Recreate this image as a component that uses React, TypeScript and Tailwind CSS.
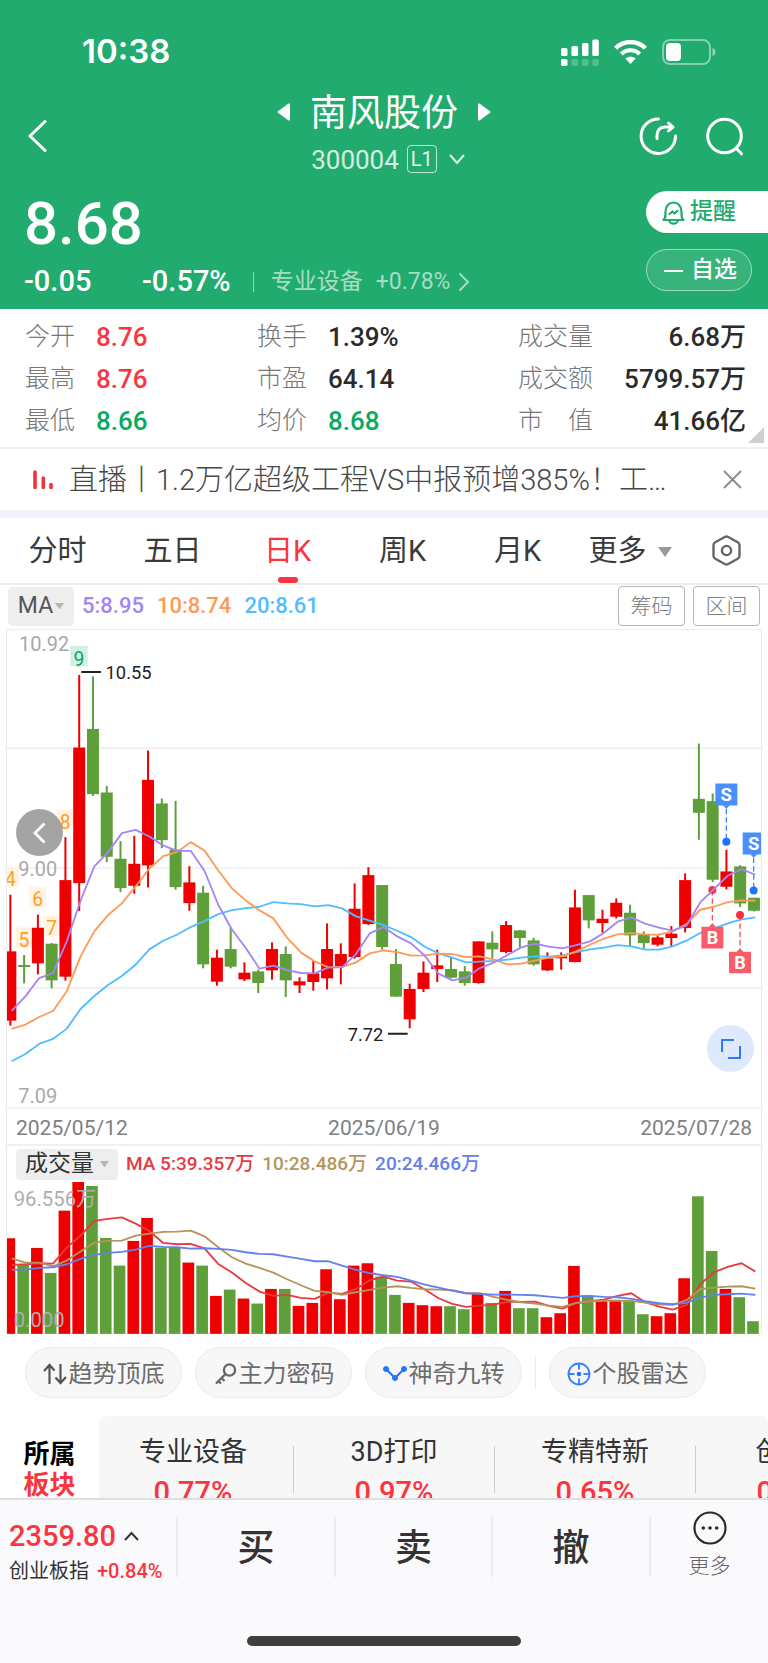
import React from "react";

type Candle = ["r" | "g", number, number, number, number];

const RED = "#ee0000";
const GREEN = "#5f9f3a";
const STEP = 41.35;

// colour, high, body top, body bottom, low
const candles: Candle[] = [
  ["r", 825, 995, 1203, 1218], ["g", 1006, 1036, 1042, 1091], ["r", 885, 924, 1031, 1064],
  ["g", 970, 972, 1082, 1106], ["r", 652, 781, 1071, 1083], ["r", 165, 383, 790, 874],
  ["g", 169, 327, 523, 528], ["g", 498, 518, 711, 727], ["g", 664, 717, 805, 817],
  ["r", 648, 732, 798, 822], ["r", 392, 480, 737, 803], ["g", 536, 551, 661, 685],
  ["g", 543, 689, 802, 810], ["r", 739, 788, 850, 873], ["g", 798, 819, 1034, 1046],
  ["r", 990, 1014, 1086, 1098], ["g", 925, 988, 1041, 1046], ["r", 1028, 1059, 1079, 1084],
  ["g", 1050, 1055, 1090, 1120], ["r", 968, 988, 1052, 1080], ["g", 980, 1003, 1082, 1132],
  ["r", 1073, 1085, 1097, 1120], ["r", 1022, 1061, 1087, 1113], ["r", 911, 988, 1076, 1109],
  ["r", 971, 1003, 1040, 1094], ["r", 791, 867, 1012, 1017], ["r", 742, 766, 913, 916],
  ["g", 796, 796, 982, 990], ["g", 988, 1033, 1131, 1131], ["r", 1092, 1108, 1199, 1226],
  ["r", 1025, 1059, 1108, 1117], ["r", 990, 1037, 1048, 1087], ["g", 1014, 1048, 1074, 1076],
  ["g", 1039, 1055, 1090, 1098], ["r", 965, 965, 1090, 1092], ["g", 935, 969, 989, 1016],
  ["r", 904, 916, 997, 1001], ["g", 931, 932, 955, 984], ["g", 954, 962, 1034, 1038],
  ["r", 998, 1016, 1052, 1054], ["r", 998, 1010, 1016, 1050], ["r", 810, 863, 1027, 1028],
  ["g", 826, 826, 902, 926], ["r", 870, 897, 910, 939], ["r", 836, 849, 891, 896],
  ["g", 855, 879, 947, 979], ["g", 935, 945, 970, 987], ["r", 948, 953, 975, 980],
  ["r", 919, 942, 955, 979], ["r", 761, 781, 925, 938], ["g", 371, 537, 579, 660],
  ["g", 521, 544, 780, 787], ["r", 690, 755, 801, 809], ["g", 736, 740, 851, 862],
  ["g", 834, 834, 873, 875],
];

const ma5 = [1174, 1130, 1075, 1060, 965, 843, 740, 697, 640, 630, 650, 677, 693, 693, 753, 855, 930, 985, 1047, 1038, 1051, 1060, 1061, 1043, 1043, 1003, 941, 922, 950, 971, 1008, 1062, 1082, 1074, 1045, 1029, 1006, 983, 972, 981, 986, 976, 965, 940, 906, 893, 912, 924, 933, 918, 848, 808, 768, 748, 765];
const ma10 = [1228, 1215, 1192, 1174, 1115, 1010, 935, 886, 851, 800, 746, 709, 697, 667, 692, 752, 806, 842, 872, 896, 954, 998, 1025, 1043, 1042, 1028, 1001, 992, 997, 1008, 1007, 1002, 1003, 1012, 1010, 1020, 1034, 1032, 1023, 1014, 1010, 995, 975, 957, 944, 940, 944, 945, 935, 913, 870, 861, 847, 842, 843];
const ma20 = [1325, 1303, 1273, 1258, 1227, 1168, 1129, 1096, 1069, 1035, 989, 963, 945, 922, 904, 883, 871, 865, 861, 847, 851, 853, 860, 856, 866, 890, 903, 916, 933, 952, 981, 1001, 1014, 1028, 1026, 1024, 1020, 1014, 1010, 1011, 1007, 997, 989, 984, 976, 980, 990, 990, 980, 963, 940, 927, 911, 899, 893];

const volumes = [415, 493, 444, 519, 332, 246, 258, 414, 497, 423, 354, 443, 443, 488, 497, 588, 569, 596, 611, 567, 567, 618, 609, 508, 598, 497, 490, 530, 585, 609, 616, 619, 619, 628, 582, 609, 573, 625, 625, 652, 640, 498, 590, 604, 600, 604, 643, 649, 640, 535, 289, 453, 567, 592, 664];
const vol5 = [495, 493, 490, 491, 443, 407, 363, 357, 352, 371, 393, 429, 433, 432, 445, 492, 518, 549, 575, 588, 585, 594, 597, 578, 582, 567, 541, 530, 542, 545, 569, 595, 612, 621, 617, 614, 606, 606, 605, 618, 626, 610, 604, 599, 588, 580, 607, 620, 629, 615, 553, 517, 501, 490, 515];
const vol10 = [475, 488, 488, 499, 482, 455, 428, 423, 422, 407, 401, 396, 395, 392, 409, 442, 472, 491, 504, 518, 538, 556, 573, 577, 585, 577, 570, 563, 559, 564, 568, 569, 571, 580, 580, 591, 600, 607, 611, 617, 621, 609, 604, 603, 602, 603, 608, 613, 615, 601, 568, 563, 560, 559, 566];
const vol20 = [510, 509, 504, 502, 493, 477, 465, 459, 456, 449, 438, 441, 442, 446, 445, 447, 450, 457, 462, 463, 470, 477, 484, 484, 497, 510, 520, 526, 531, 542, 554, 563, 572, 580, 582, 584, 584, 585, 586, 590, 594, 589, 588, 591, 592, 597, 604, 610, 613, 609, 593, 585, 583, 581, 585];

function Line({ ys, color }: { ys: number[]; color: string }) {
  return (
    <polyline
      points={ys.map((y, i) => `${(34 + i * STEP).toFixed(1)},${y}`).join(" ")}
      fill="none"
      stroke={color}
      strokeWidth="5.5"
      strokeLinejoin="round"
    />
  );
}

const counts: [string, number, number, string, string][] = [
  ["4", 30, 740, "#ff9d1c", "#fff3e4"],
  ["5", 71, 923, "#ff9d1c", "#fff3e4"],
  ["6", 112, 801, "#ff9d1c", "#fff3e4"],
  ["7", 154, 888, "#ff9d1c", "#fff3e4"],
  ["8", 195, 568, "#ff9d1c", "#fff3e4"],
  ["9", 236, 78, "#07a862", "#d3efe1"],
];

function Sell({ x, y, dot }: { x: number; y: number; dot: number }) {
  return (
    <g>
      <path d={`M${x} ${y + 76}V${dot}`} stroke="#3f86fb" strokeWidth="4" strokeDasharray="16 9" />
      <path d={`M${x - 33} ${y}h66v66h-23l-10 10l-10 -10h-23z`} fill="#4a8ffc" />
      <text x={x} y={y + 52} textAnchor="middle" fontSize="56" fontWeight="700" fill="#fff">S</text>
      <circle cx={x} cy={dot} r="12" fill="#1f74ff" />
    </g>
  );
}

function Buy({ x, y, dot }: { x: number; y: number; dot: number }) {
  return (
    <g>
      <path d={`M${x} ${dot}V${y - 10}`} stroke="#f7515e" strokeWidth="4" strokeDasharray="16 9" />
      <path d={`M${x - 33} ${y}h23l10 -11l10 11h23v65h-66z`} fill="#fa5c69" />
      <text x={x} y={y + 52} textAnchor="middle" fontSize="54" fontWeight="700" fill="#fff">B</text>
      <circle cx={x} cy={dot} r="12" fill="#f5333f" />
    </g>
  );
}

function PriceChart() {
  return (
    <svg viewBox="20 27 2264 1440" className="block w-full" role="img" aria-label="日K">
      {[28, 385, 745, 1105, 1465].map((y) => (
        <path key={y} d={`M20 ${y}H2284`} stroke="#ececee" strokeWidth="4" />
      ))}
      <g fill="#a9a9a9" fontSize="60">
        <text x="56" y="92">10.92</text>
        <text x="54" y="770">9.00</text>
        <text x="54" y="1449">7.09</text>
      </g>
      {counts.map(([n, x, y, , bg]) => (
        <path key={n} d={`M${x - 26} ${y}h52v61h-20l-6 6l-6 -6h-20z`} fill={bg} />
      ))}
      {candles.map(([c, hi, top, bottom, lo], i) => {
        const x = 30 + i * STEP;
        const fill = c === "r" ? RED : GREEN;
        return (
          <g key={i} fill={fill}>
            <rect x={x - 3} y={hi} width="6" height={Math.max(lo - hi, 1)} />
            <rect x={x - 18} y={top} width="36" height={bottom - top} />
          </g>
        );
      })}
      {counts.map(([n, x, y, color]) => (
        <text key={n} x={x} y={y + 59} textAnchor="middle" fontSize="58" fill={color}>{n}</text>
      ))}
      <path d="M243 156H302M1164 1242H1223" stroke="#222" strokeWidth="6" />
      <g fill="#222" fontSize="55">
        <text x="316" y="178">10.55</text>
        <text x="1043" y="1263">7.72</text>
      </g>
      <Line ys={ma20} color="#4fbdff" />
      <Buy x={2138} y={921} dot={811} />
      <Buy x={2221} y={996} dot={886} />
      <Sell x={2180} y={491} dot={666} />
      <Sell x={2262} y={638} dot={812} />
      <Line ys={ma10} color="#ff9a55" />
      <Line ys={ma5} color="#a385f5" />
    </svg>
  );
}

function VolumeChart() {
  return (
    <svg viewBox="20 240 2264 465" className="block w-full" role="img" aria-label="成交量">
      <path d="M20 703H2284" stroke="#dcdcdc" strokeWidth="4" />
      {volumes.map((y, i) => (
        <rect key={i} x={9.5 + i * STEP} y={y} width="35" height={702 - y} fill={candles[i][0] === "r" ? RED : GREEN} />
      ))}
      <Line ys={vol5} color="#e83a40" />
      <Line ys={vol10} color="#b5945c" />
      <Line ys={vol20} color="#6381ea" />
      <g fill="#aeaeae" fontSize="61">
        <text x="40" y="317">96.556万</text>
        <text x="40" y="681">0.000</text>
      </g>
    </svg>
  );
}

const tabs = ["分时", "五日", "日K", "周K", "月K"];

const stats: [string, string, string][][] = [
  [["今开", "8.76", "text-[#fb3540]"], ["换手", "1.39%", "text-[#2b2b2b]"], ["成交量", "6.68万", "text-[#2b2b2b]"]],
  [["最高", "8.76", "text-[#fb3540]"], ["市盈", "64.14", "text-[#2b2b2b]"], ["成交额", "5799.57万", "text-[#2b2b2b]"]],
  [["最低", "8.66", "text-[#07ab60]"], ["均价", "8.68", "text-[#07ab60]"], ["市　值", "41.66亿", "text-[#2b2b2b]"]],
];

function Header() {
  return (
    <header className="bg-[#22ab6e] text-white">
      <div className="flex h-[88px] items-center justify-between pt-4 pr-[52px] pl-[82px]">
        <span className="font-[family-name:Inter] text-[33px] font-semibold">10:38</span>
        <div className="flex items-center gap-[15px]">
          <svg width="38" height="27" viewBox="0 0 38 27" fill="#fff">
            <rect x="0" y="9" width="6.5" height="8" rx="1.6" />
            <rect x="10.4" y="7" width="6.7" height="10" rx="1.6" />
            <rect x="21" y="4" width="6.5" height="13" rx="1.6" />
            <rect x="31.3" y="0.5" width="6.5" height="16.5" rx="1.6" />
            <rect x="0" y="20" width="6.5" height="7" rx="1.6" />
            <g opacity="0.22">
              <rect x="10.4" y="20" width="6.7" height="7" rx="1.6" />
              <rect x="21" y="20" width="6.5" height="7" rx="1.6" />
              <rect x="31.3" y="20" width="6.5" height="7" rx="1.6" />
            </g>
          </svg>
          <svg width="33" height="25" viewBox="0 0 33 25" fill="none" stroke="#fff">
            <path d="M1.6 8.2C10 0 23 0 31.4 8.2" strokeWidth="4.4" />
            <path d="M7.3 14C12.5 9 20.5 9 25.7 14" strokeWidth="4.2" />
            <path d="M11.4 18.6C14.4 16 18.6 16 21.6 18.6L16.5 24Z" fill="#fff" stroke="none" />
          </svg>
          <svg width="54" height="26" viewBox="0 0 54 26">
            <rect x="1" y="1" width="47" height="24" rx="7" fill="none" stroke="#fff" strokeOpacity="0.45" strokeWidth="2" />
            <rect x="4" y="4" width="15" height="18" rx="4" fill="#fff" />
            <path d="M50.5 9c4 1 4 7 0 8z" fill="#fff" fillOpacity="0.5" />
          </svg>
        </div>
      </div>

      <div className="grid h-[96px] grid-cols-[1fr_auto_1fr]">
        <button aria-label="返回" className="flex items-center pl-7">
          <svg width="20" height="34" viewBox="0 0 20 34" fill="none" stroke="#fff" strokeWidth="3" strokeLinecap="round" strokeLinejoin="round">
            <path d="M17 2.500L2 17L17 31.500" />
          </svg>
        </button>
        <div className="flex flex-col items-center">
          <div className="flex h-12 items-center gap-[19px]">
            <button aria-label="上一只">
              <svg width="14" height="18" viewBox="0 0 14 18" fill="#fff"><path d="M1 8.200L11.500 .6Q13 0 13 1.500V16.500Q13 18 11.500 17.400L1 9.800Q0 9 1 8.200Z" /></svg>
            </button>
            <h1 className="pt-1 text-[37px] leading-[44px]">南风股份</h1>
            <button aria-label="下一只">
              <svg width="14" height="18" viewBox="0 0 14 18" fill="#fff"><path d="M13 8.200L2.500 .6Q1 0 1 1.500V16.500Q1 18 2.500 17.400L13 9.800Q14 9 13 8.200Z" /></svg>
            </button>
          </div>
          <button className="flex h-[46px] items-center pl-2">
            <span className="pt-[2px] text-[26px] leading-[44px] text-white/80">300004</span>
            <span className="ml-2 flex h-7 w-[30px] items-center justify-center rounded-[4px] border border-white/70 text-[20px] text-white/90">L1</span>
            <svg className="ml-3" width="16" height="11" viewBox="0 0 16 11" fill="none" stroke="#fff" strokeOpacity="0.85" strokeWidth="2" strokeLinecap="round">
              <path d="M1.500 1.500L8 9L14.500 1.500" />
            </svg>
          </button>
        </div>
        <div className="flex items-center justify-end gap-[28px] pr-6">
          <button aria-label="分享">
            <svg width="40" height="40" viewBox="0 0 40 40" fill="none" stroke="#fff" strokeWidth="3" strokeLinecap="round" strokeLinejoin="round">
              <path d="M20.500 3A17.200 17.200 0 1 0 37.500 20" />
              <path d="M19 22.500V20C19 14 22 11 27 11H34M30.500 7L35 11L30.500 14.800" />
            </svg>
          </button>
          <button aria-label="搜索">
            <svg width="38" height="40" viewBox="0 0 38 40" fill="none" stroke="#fff" strokeWidth="3" strokeLinecap="round">
              <circle cx="18.500" cy="20" r="16.800" />
              <path d="M30.500 32.500L35.500 37.800" />
            </svg>
          </button>
        </div>
      </div>

      <div className="flex h-[125px] justify-between pl-6">
        <div className="pt-[10px]">
          <div className="text-[60px] leading-[60px] font-medium">8.68</div>
          <div className="mt-[13px] flex h-[30px] items-center text-[29px] font-medium">
            <span className="w-[118px]">-0.05</span>
            <span>-0.57%</span>
            <span className="mr-[17px] ml-[22px] h-5 w-px bg-white/50" />
            <a href="#sector" className="flex items-center text-[23px] font-normal text-white/60">
              专业设备<span className="ml-[13px]">+0.78%</span>
              <svg className="ml-2" width="12" height="20" viewBox="0 0 12 20" fill="none" stroke="#fff" strokeOpacity="0.6" strokeWidth="2">
                <path d="M1.500 1.500L10 10L1.500 18.500" />
              </svg>
            </a>
          </div>
        </div>
        <div className="flex w-[122px] flex-col gap-4 pt-[7px]">
          <button className="flex h-[42px] items-center rounded-l-full bg-white pt-px pl-4 text-[23px] font-medium text-[#22ab6e]">
            <svg className="mr-[5px]" width="23" height="24" viewBox="0 0 23 24" fill="none" stroke="#22ab6e" strokeWidth="2.200" strokeLinecap="round" strokeLinejoin="round">
              <path d="M1.500 19H21.500C19.500 17.500 19.500 15.500 19.500 10.500C19.500 5 16 1.500 11.500 1.500S3.500 5 3.500 10.500C3.500 15.500 3.500 17.500 1.500 19Z" />
              <path d="M7.500 20.500C8.500 23.300 14.500 23.300 15.500 20.500" />
              <path d="M7.500 13L10.500 10.500L12.500 12.500L15.500 9.800" />
            </svg>
            提醒
          </button>
          <button className="flex h-[42px] w-[106px] items-center rounded-full border border-white/50 bg-white/10 pt-px pl-[17px] text-[23px] font-medium">
            <span className="mr-[8px] h-[2px] w-[19px] bg-white" />
            自选
          </button>
        </div>
      </div>
    </header>
  );
}

function Triangle({ className }: { className: string }) {
  return (
    <svg viewBox="0 0 14 10" className={className} fill="currentColor"><path d="M0 0H14L7 10Z" /></svg>
  );
}

const pill = "flex h-[51px] w-[157px] items-center justify-center gap-[2px] rounded-full border border-[#ebebeb] bg-[#f7f7f7] pt-[2px] text-[24px] text-[#6c6c6c]";

const sectors: [string, string][] = [["专业设备", "0.77%"], ["3D打印", "0.97%"], ["专精特新", "0.65%"], ["创业板", "0.84%"]];

export default function App() {
  return (
    <div className="flex min-h-screen flex-col overflow-x-hidden bg-white font-[family-name:Roboto,'Noto_Sans_CJK_SC',sans-serif] text-[#333]">
      <Header />

      <section className="relative border-b-2 border-[#f0f0f1] pt-[7px] pr-[22px] pb-[5px] pl-[25px]">
        {stats.map((row, r) => (
          <dl key={r} className="grid h-[42px] grid-cols-[232fr_261fr_228fr] items-center">
            {row.map(([label, value, color], c) => (
              <div key={label} className={c === 2 ? "flex items-center justify-between" : "flex items-center gap-[21px]"}>
                <dt className="text-[25px] leading-[42px] font-light text-[#777]">{label}</dt>
                <dd className={`text-[26px] leading-[42px] font-medium ${color}`}>{value}</dd>
              </div>
            ))}
          </dl>
        ))}
        <svg className="absolute right-1 bottom-1" width="16" height="16" viewBox="0 0 16 16"><path d="M16 0V16H0Z" fill="#cfcfcf" /></svg>
      </section>

      <section className="flex h-[61px] items-center pr-[26px] pl-8">
        <svg width="22" height="20" viewBox="0 0 22 20" stroke="#f0323c" strokeWidth="3.600" strokeLinecap="round">
          <path d="M3 2V17.500M11.300 8V17.500M19 14.500V17.500" />
        </svg>
        <a href="#live" className="ml-[15px] min-w-0 flex-1 truncate text-[29px] leading-[40px] font-light text-[#484848]">直播丨1.2万亿超级工程VS中报预增385%！工…</a>
        <button aria-label="关闭" className="ml-4">
          <svg width="19" height="19" viewBox="0 0 19 19" stroke="#8a8a8a" strokeWidth="1.800"><path d="M1 1L18 18M18 1L1 18" /></svg>
        </button>
      </section>
      <div className="h-2 bg-[#f3f4fa]" />

      <nav className="grid h-[67px] grid-cols-[115fr_115fr_115fr_115fr_115fr_110fr_83fr] border-b-2 border-[#ececec] text-[29px] text-[#3a3a3a]">
        {tabs.map((t) => (
          <button key={t} className={`relative flex items-center justify-center pt-[3px] ${t === "日K" ? "text-[#fb3540]" : ""}`}>
            {t}
            {t === "日K" && <span className="absolute bottom-0 h-[6px] w-5 rounded-[3px] bg-[#fb3540]" />}
          </button>
        ))}
        <button className="flex items-center justify-center gap-[11px] pt-[3px]">
          更多<Triangle className="w-[14px] text-[#999]" />
        </button>
        <button aria-label="设置" className="flex items-center justify-center">
          <svg width="29" height="31" viewBox="0 0 29 31" fill="none" stroke="#666" strokeWidth="2.400" strokeLinejoin="round">
            <path d="M12.700 2Q14.500 1 16.300 2L25.700 7.200Q27.500 8.200 27.500 10.200V20.800Q27.500 22.800 25.700 23.800L16.300 29Q14.500 30 12.700 29L3.300 23.800Q1.500 22.800 1.500 20.800V10.200Q1.500 8.200 3.300 7.200Z" />
            <circle cx="14.500" cy="15.500" r="4.600" />
          </svg>
        </button>
      </nav>

      <div className="flex h-11 items-center px-2 pb-[2px] text-[22px] leading-[36px]">
        <button className="flex h-[39px] w-[66px] items-center justify-center gap-[2px] rounded-[5px] bg-[#eee] text-[23px] text-[#555]">
          MA<Triangle className="w-[9px] text-[#b5b5b5]" />
        </button>
        <span className="ml-2 font-medium text-[#a385f5]">5:8.95</span>
        <span className="ml-[13px] font-medium text-[#ff9a55]">10:8.74</span>
        <span className="ml-[13px] font-medium text-[#4fbdff]">20:8.61</span>
        <button className="ml-auto h-10 w-[67px] rounded-[4px] border border-[#b5b5b5] text-[21px] font-light text-[#808080]">筹码</button>
        <button className="ml-2 h-10 w-[67px] rounded-[4px] border border-[#b5b5b5] text-[21px] font-light text-[#808080]">区间</button>
      </div>

      <section className="relative mx-[6px] border-x border-[#ececee]">
        <PriceChart />
        <button aria-label="向左" className="absolute top-[180px] left-[9px] flex size-[47px] items-center justify-center rounded-full bg-[#9f9f9f]/95">
          <svg width="14" height="22" viewBox="0 0 14 22" fill="none" stroke="#fff" strokeWidth="2.800"><path d="M11.500 1.500L2 11L11.500 20.500" /></svg>
        </button>
        <button aria-label="全屏" className="absolute top-[396px] right-[7px] flex size-[47px] items-center justify-center rounded-full bg-[#dfe9fe]">
          <svg width="22" height="22" viewBox="0 0 22 22" fill="none" stroke="#2e78ff" strokeWidth="2"><path d="M14 2H2V14M20 8V20H8" /></svg>
        </button>
        <div className="grid h-[35px] grid-cols-3 items-center px-[9px] pt-1 text-[21px] leading-[30px] text-[#808080]">
          <span>2025/05/12</span>
          <span className="text-center">2025/06/19</span>
          <span className="text-right">2025/07/28</span>
        </div>
        <div className="flex h-9 items-center border-t-2 border-[#f0f0f2] pt-[3px] pl-[9px] text-[19px] font-medium">
          <button className="flex h-[31px] w-[102px] items-center justify-center gap-[6px] rounded-[4px] bg-[#eee] text-[23px] font-normal text-[#333]">
            成交量<Triangle className="w-[9px] text-[#b5b5b5]" />
          </button>
          <span className="ml-2 text-[#e83a40]">MA 5:39.357万</span>
          <span className="ml-2 text-[#b5945c]">10:28.486万</span>
          <span className="ml-2 text-[#6381ea]">20:24.466万</span>
        </div>
        <VolumeChart />
      </section>

      <div className="flex gap-[13px] pt-[13px] pl-[25px]">
        <button className={pill}>
          <svg width="24" height="22" viewBox="0 0 24 22" fill="none" stroke="#555" strokeWidth="2.200"><path d="M6.500 21V2.500M1 8L6.500 2L11.500 7.500M17.500 1V19.500M12.500 14.500L17.500 20L23 14" /></svg>
          趋势顶底
        </button>
        <button className={pill}>
          <svg width="24" height="22" viewBox="0 0 24 22" fill="none" stroke="#666" strokeWidth="2.300"><circle cx="16.500" cy="7" r="5.600" /><path d="M12.500 11L3 20.500M8.500 15L11.500 18M5 17.500L8 20.500" /></svg>
          主力密码
        </button>
        <button className={pill}>
          <svg width="24" height="17" viewBox="0 0 24 17" fill="#2474ff" stroke="#2474ff"><path d="M3 4L12 13L21 4" fill="none" strokeWidth="2.200" /><circle cx="3" cy="4" r="2.500" /><circle cx="12" cy="13" r="2.500" /><circle cx="21" cy="4" r="2.500" /></svg>
          神奇九转
        </button>
        <span className="my-auto h-8 w-px bg-[#e9e9e9]" />
        <button className={pill}>
          <svg width="24" height="24" viewBox="0 0 24 24" fill="none" stroke="#3a80ff" strokeWidth="1.900"><circle cx="12" cy="12" r="10.500" /><path d="M12 1V7.500M12 16.500V23M1 12H7.500M16.500 12H23" /><circle cx="12" cy="12" r="2.300" fill="#2474ff" stroke="none" /></svg>
          个股雷达
        </button>
      </div>

      <section className="mt-[18px] flex max-h-[82px] overflow-hidden">
        <h2 className="w-[99px] shrink-0 pt-[23px] text-center text-[26px] leading-[31px] font-bold text-black">
          所属<br /><span className="text-[#fb3540]">板块</span>
        </h2>
        <ul className="flex min-w-0 flex-1 overflow-hidden rounded-t-[8px] bg-[#f7f7f8]">
          {sectors.map(([name, pct], i) => (
            <li key={name} className={`flex shrink-0 items-start ${i === 0 ? "w-[195px]" : "w-[201px]"}`}>
              <a href="#sector" className={`flex-1 pt-4 text-center ${i === 0 ? "pr-[6px]" : ""}`}>
                <span className="block text-[27px] leading-[40px] text-[#333]">{name}</span>
                <span className="block text-[29px] leading-[40px] font-medium text-[#fb3540]">{pct}</span>
              </a>
              <span className="mt-[30px] h-[47px] w-px bg-[#ccc]" />
            </li>
          ))}
        </ul>
      </section>

      <footer className="mt-auto border-t-2 border-[#dfdfe1] bg-[#fafafc]">
        <div className="grid grid-cols-[176fr_158fr_157fr_158fr_119fr] pt-[17px]">
          <a href="#index" className="block pl-[9px]">
            <span className="flex h-[38px] items-center gap-2 text-[29px] font-medium text-[#fb3540]">
              2359.80
              <svg width="15" height="10" viewBox="0 0 15 10" fill="none" stroke="#333" strokeWidth="2"><path d="M1 9L7.500 2L14 9" /></svg>
            </span>
            <span className="flex h-8 items-center gap-2 text-[20px] whitespace-nowrap text-[#333]">
              创业板指<span className="font-medium text-[#fb3540]">+0.84%</span>
            </span>
          </a>
          {["买", "卖", "撤"].map((t) => (
            <button key={t} className="h-[60px] border-l-2 border-[#ececee] pt-[3px] text-[37px] leading-[57px] font-medium text-[#333]">{t}</button>
          ))}
          <button className="flex h-[60px] flex-col items-center border-l-2 border-[#ececee] text-[21px] text-[#666]">
            <svg className="-mt-[6px] shrink-0" width="34" height="34" viewBox="0 0 34 34" fill="#2b2b2b"><circle cx="17" cy="17" r="15.500" fill="none" stroke="#2b2b2b" strokeWidth="2.200" /><circle cx="10.300" cy="17" r="1.800" /><circle cx="17" cy="17" r="1.800" /><circle cx="23.700" cy="17" r="1.800" /></svg>
            <span className="mt-[6px] leading-[30px] font-light">更多</span>
          </button>
        </div>
        <div className="mx-auto mt-[49px] mb-[17px] h-[10px] w-[274px] rounded-full bg-[#3f3f3f]" />
      </footer>
    </div>
  );
}
